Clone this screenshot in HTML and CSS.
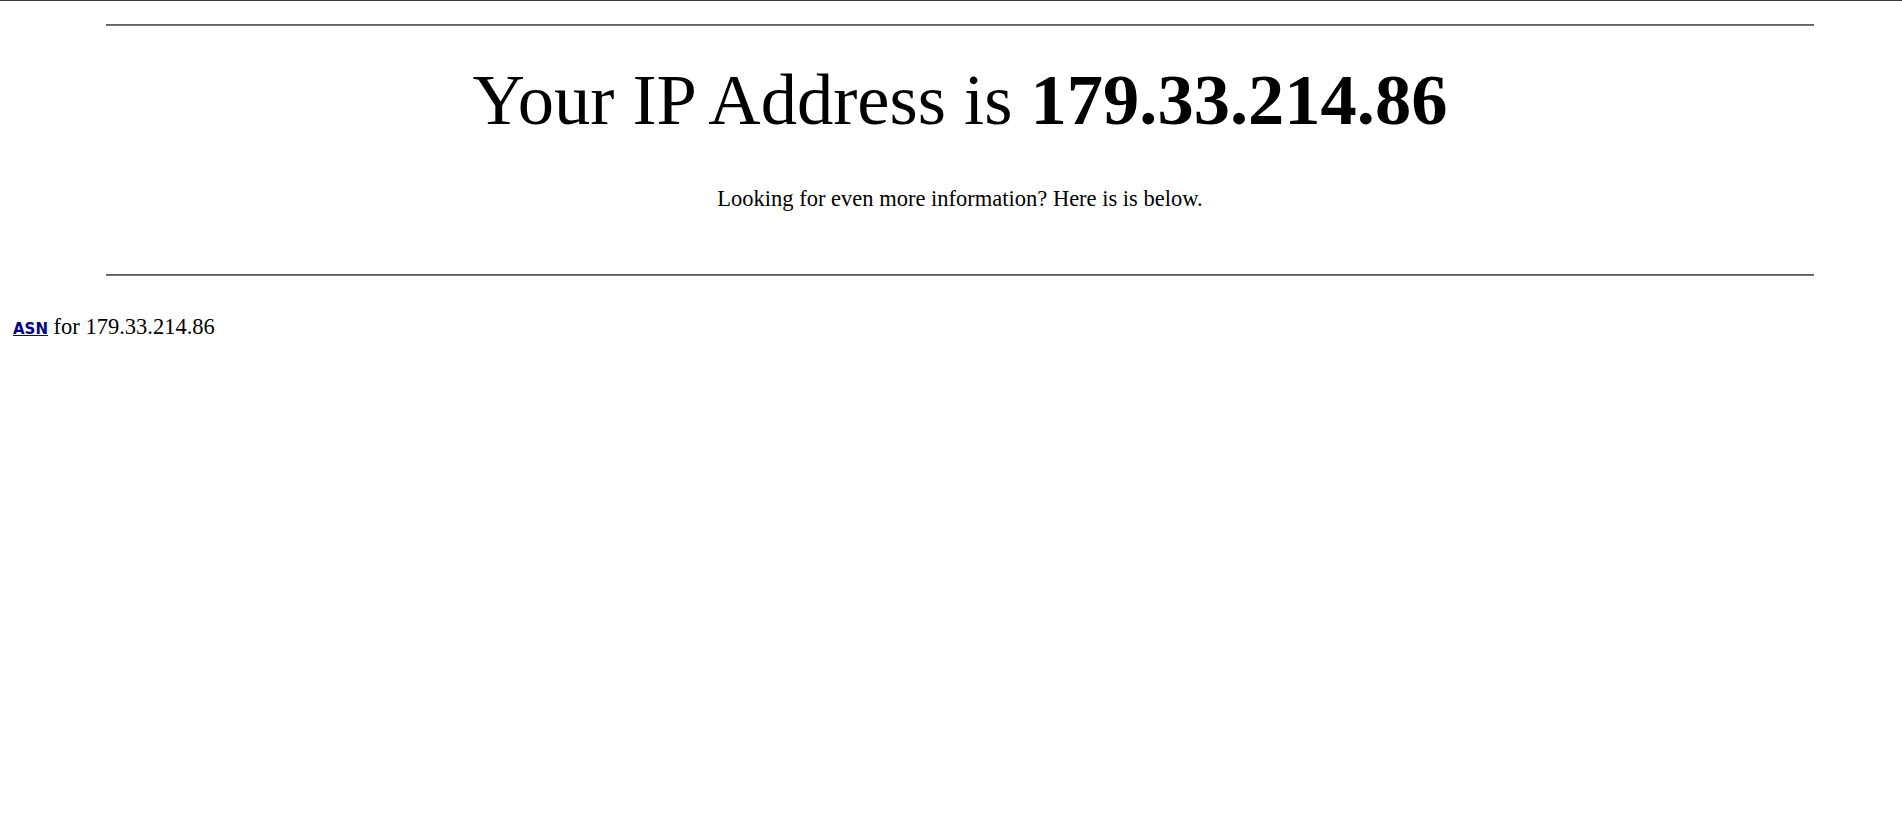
FILE: index.html
```html
<!DOCTYPE html>
<html lang="en">
<head>
<meta charset="utf-8">
<title>Your IP Address</title>
<link rel="stylesheet" href="styles.css">
</head>
<body>
<div class="topline"></div>
<header class="banner">
  <hr class="rule">
  <h1 class="title">Your IP Address is <strong>179.33.214.86</strong></h1>
  <p class="lead">Looking for even more information? Here is is below.</p>
  <hr class="rule rule-bottom">
</header>
<section class="details">
  <p class="asn-line"><a class="asn" href="#asn">ASN</a> for 179.33.214.86</p>
</section>
</body>
</html>
```
FILE: styles.css
```css
html, body {
  margin: 0;
  padding: 0;
  background: #ffffff;
}

body {
  font-family: "Liberation Serif", "Times New Roman", serif;
  color: #000000;
  font-size: 22.5px;
}

.topline {
  height: 1px;
  background: #3a3a3a;
}

.banner {
  margin: 0 88px 0 106px;
  padding-top: 23px;
  text-align: center;
}

.rule {
  margin: 0;
  height: 0;
  border: 0;
  border-top: 1px solid #5e5e5e;
  border-bottom: 1px solid #7a7a7a;
}

.title {
  margin: 32px 0 0;
  font-size: 72.5px;
  line-height: 83px;
  font-weight: normal;
}

.title strong {
  font-weight: bold;
}

.lead {
  margin: 45px 0 0;
  font-size: 22.5px;
  line-height: 25px;
}

.rule-bottom {
  margin-top: 63px;
}

.details {
  padding: 38px 0 0 13px;
}

.asn-line {
  margin: 0;
  font-size: 22.5px;
  line-height: 25px;
}

.asn {
  font-family: "DejaVu Sans", Verdana, sans-serif;
  font-weight: bold;
  font-size: 15px;
  color: #000080;
  text-decoration: underline;
}
```
